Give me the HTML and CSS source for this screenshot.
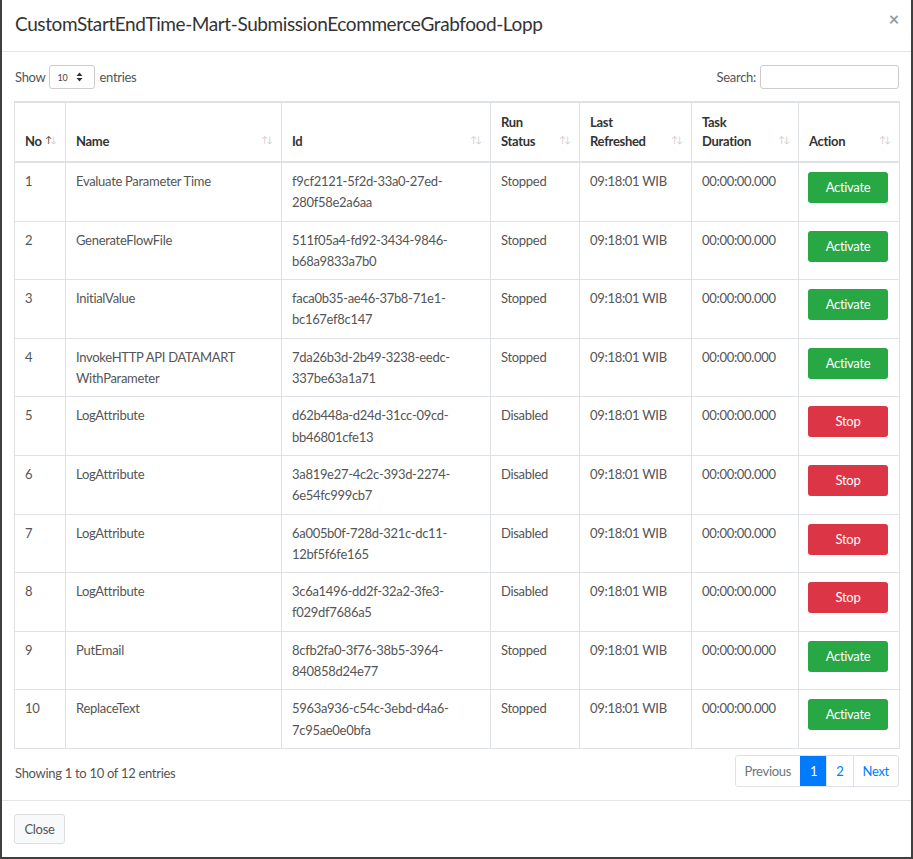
FILE: index.html
```html
<!DOCTYPE html>
<html>
<head>
<meta charset="utf-8">
<link rel="stylesheet" href="styles.css">
</head>
<body>
<div class="modal">
  <div class="modal-header">
    <h4 class="modal-title">CustomStartEndTime-Mart-SubmissionEcommerceGrabfood-Lopp</h4>
    <span class="close">×</span>
  </div>
  <div class="modal-body">
    <div class="dt-top">
      <label class="length">Show <span class="select"><span>10</span><svg width="7" height="10" viewBox="0 0 7 10"><path d="M3.5 0.5 L6.5 4 H0.5 Z M3.5 9.5 L6.5 6 H0.5 Z" fill="#333"/></svg></span> entries</label>
      <label class="search">Search: <span class="input"></span></label>
    </div>
    <table class="dt">
      <colgroup>
        <col style="width:51px"><col style="width:216px"><col style="width:209px"><col style="width:89px"><col style="width:112px"><col style="width:107px"><col style="width:101px">
      </colgroup>
      <thead>
        <tr>
          <th class="sort asc">No</th>
          <th class="sort">Name</th>
          <th class="sort">Id</th>
          <th class="sort">Run<br>Status</th>
          <th class="sort">Last<br>Refreshed</th>
          <th class="sort">Task<br>Duration</th>
          <th class="sort">Action</th>
        </tr>
      </thead>
      <tbody>
        <tr><td>1</td><td>Evaluate Parameter Time</td><td>f9cf2121-5f2d-33a0-27ed-<br>280f58e2a6aa</td><td>Stopped</td><td>09:18:01 WIB</td><td>00:00:00.000</td><td><span class="btn green">Activate</span></td></tr>
        <tr><td>2</td><td>GenerateFlowFile</td><td>511f05a4-fd92-3434-9846-<br>b68a9833a7b0</td><td>Stopped</td><td>09:18:01 WIB</td><td>00:00:00.000</td><td><span class="btn green">Activate</span></td></tr>
        <tr><td>3</td><td>InitialValue</td><td>faca0b35-ae46-37b8-71e1-<br>bc167ef8c147</td><td>Stopped</td><td>09:18:01 WIB</td><td>00:00:00.000</td><td><span class="btn green">Activate</span></td></tr>
        <tr><td>4</td><td>InvokeHTTP API DATAMART<br>WithParameter</td><td>7da26b3d-2b49-3238-eedc-<br>337be63a1a71</td><td>Stopped</td><td>09:18:01 WIB</td><td>00:00:00.000</td><td><span class="btn green">Activate</span></td></tr>
        <tr><td>5</td><td>LogAttribute</td><td>d62b448a-d24d-31cc-09cd-<br>bb46801cfe13</td><td>Disabled</td><td>09:18:01 WIB</td><td>00:00:00.000</td><td><span class="btn red">Stop</span></td></tr>
        <tr><td>6</td><td>LogAttribute</td><td>3a819e27-4c2c-393d-2274-<br>6e54fc999cb7</td><td>Disabled</td><td>09:18:01 WIB</td><td>00:00:00.000</td><td><span class="btn red">Stop</span></td></tr>
        <tr><td>7</td><td>LogAttribute</td><td>6a005b0f-728d-321c-dc11-<br>12bf5f6fe165</td><td>Disabled</td><td>09:18:01 WIB</td><td>00:00:00.000</td><td><span class="btn red">Stop</span></td></tr>
        <tr><td>8</td><td>LogAttribute</td><td>3c6a1496-dd2f-32a2-3fe3-<br>f029df7686a5</td><td>Disabled</td><td>09:18:01 WIB</td><td>00:00:00.000</td><td><span class="btn red">Stop</span></td></tr>
        <tr><td>9</td><td>PutEmail</td><td>8cfb2fa0-3f76-38b5-3964-<br>840858d24e77</td><td>Stopped</td><td>09:18:01 WIB</td><td>00:00:00.000</td><td><span class="btn green">Activate</span></td></tr>
        <tr><td>10</td><td>ReplaceText</td><td>5963a936-c54c-3ebd-d4a6-<br>7c95ae0e0bfa</td><td>Stopped</td><td>09:18:01 WIB</td><td>00:00:00.000</td><td><span class="btn green">Activate</span></td></tr>
      </tbody>
    </table>
    <div class="dt-bottom">
      <div class="info">Showing 1 to 10 of 12 entries</div>
      <ul class="pagination">
        <li class="disabled">Previous</li>
        <li class="active">1</li>
        <li>2</li>
        <li>Next</li>
      </ul>
    </div>
  </div>
  <div class="modal-footer">
    <span class="btn-close">Close</span>
  </div>
</div>
</body>
</html>
```

FILE: styles.css
```css
* { box-sizing: border-box; }
html, body { margin: 0; padding: 0; }
body {
  background: #404040;
  width: 913px;
  height: 859px;
  font-family: "Lato", "Open Sans", sans-serif;
  font-size: 13px;
  letter-spacing: -0.3px;
  color: #555;
  overflow: hidden;
}
.modal {
  margin: 0 2px 0 2px;
  width: 909px;
  height: 857px;
  background: #fff;
  display: flex;
  flex-direction: column;
}
.modal-header {
  height: 52px;
  border-bottom: 1px solid #e5e5e5;
  display: flex;
  align-items: flex-start;
  justify-content: space-between;
  padding: 12px 13px 0 13px;
}
.modal-title {
  margin: 0;
  font-size: 19px;
  letter-spacing: -0.4px;
  font-weight: 400;
  color: #333;
  line-height: 24px;
}
.close {
  font-size: 18px;
  color: #999;
  line-height: 14px;
  margin-top: 0;
  margin-right: -1px;
  font-weight: 700;
}
.modal-body {
  padding: 13px 10px 0 12px;
  flex: 1;
}
.dt-top {
  display: flex;
  justify-content: space-between;
  align-items: center;
  width: 885px;
  height: 24px;
  margin-bottom: 12px;
  padding-left: 1px;
}
.length, .search {
  display: flex;
  align-items: center;
  gap: 4px;
  color: #555;
}
.select {
  width: 46px;
  height: 24px;
  border: 1px solid #ccc;
  border-radius: 3px;
  display: inline-flex;
  align-items: center;
  justify-content: space-between;
  padding: 0 11px 0 7px;
  font-size: 9px;
  color: #444;
}
.input {
  display: inline-block;
  width: 139px;
  height: 24px;
  border: 1px solid #ccc;
  border-radius: 3px;
}
.dt {
  width: 885px;
  border-collapse: collapse;
  table-layout: fixed;
  border: 1px solid #dee2e6;
}
.dt th, .dt td {
  border: 1px solid #dee2e6;
  text-align: left;
}
.dt thead th {
  border-top: 2px solid #dee2e6;
  border-bottom: 2px solid #dee2e6;
  vertical-align: bottom;
  padding: 10px 24px 10px 10px;
  line-height: 19px;
  font-weight: 700;
  color: #333;
  position: relative;
}
.sort::before, .sort::after {
  position: absolute;
  bottom: 16px;
  font-size: 9px;
  line-height: 10px;
  color: #ccc;
  font-weight: 400;
  letter-spacing: 0;
}
.sort::before { content: "\2191"; right: 13px; }
.sort::after { content: "\2193"; right: 8px; }
.asc::before { color: #333; right: 13px; }
.asc::after { right: 8px; }
.asc { padding-right: 4px !important; }
.dt td {
  vertical-align: top;
  padding: 8px 10px 7px 10px;
  line-height: 21.3px;
}
.btn {
  display: block;
  width: 80px;
  height: 31px;
  line-height: 31px;
  border-radius: 3px;
  text-align: center;
  color: #fff;
  font-size: 13px;
  margin-top: 1px;
  margin-left: -1px;
}
.green { background: #28a745; }
.red { background: #dc3545; }
.dt-bottom {
  display: flex;
  justify-content: space-between;
  align-items: center;
  width: 885px;
  padding-top: 6px;
}
.info { padding-left: 1px; padding-top: 4px; }
.pagination {
  list-style: none;
  margin: 0;
  padding: 0;
  display: flex;
  border: 1px solid #dee2e6;
  border-radius: 3px;
  height: 32px;
}
.pagination li {
  padding: 0 9px;
  line-height: 30px;
  color: #007bff;
  border-left: 1px solid #dee2e6;
}
.pagination li:first-child { border-left: none; }
.pagination .disabled { color: #6c757d; }
.pagination .active { background: #007bff; color: #fff; border-color: #007bff; }
.modal-footer {
  border-top: 1px solid #e5e5e5;
  height: 57px;
  padding: 13px 12px;
}
.btn-close {
  display: inline-block;
  width: 51px;
  height: 30px;
  line-height: 28px;
  border: 1px solid #ddd;
  border-radius: 3px;
  background: #f8f9fa;
  color: #555;
  text-align: center;
}
```
